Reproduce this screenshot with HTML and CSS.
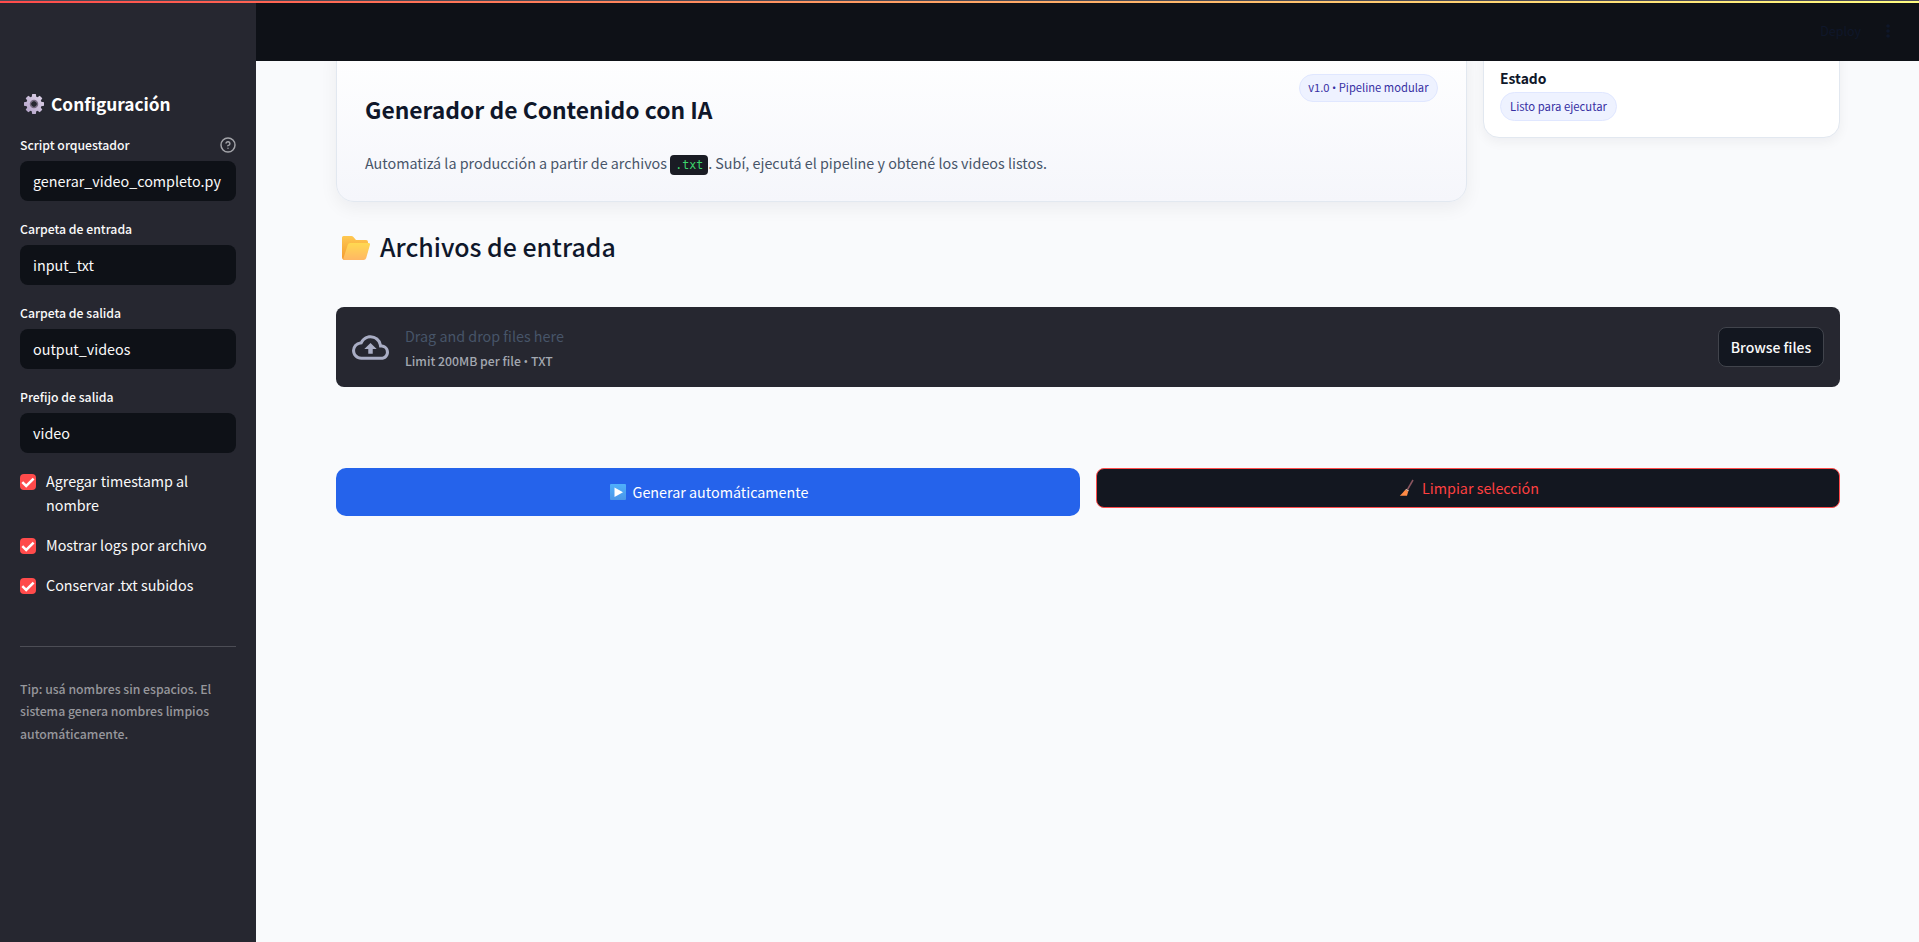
FILE: index.html
```html
<!DOCTYPE html>
<html lang="es">
<head>
<meta charset="utf-8">
<title>Generador de Contenido con IA</title>
<link rel="stylesheet" href="styles.css">
</head>
<body>
<div class="decoration"></div>
<div class="app">
  <aside class="sidebar">
    <h2 class="side-title">
      <svg class="gear" viewBox="0 0 20 20"><defs><linearGradient id="g" x1="1" y1="0" x2="0" y2="1"><stop offset="0" stop-color="#e0d6ea"/><stop offset="1" stop-color="#b09fc6"/></linearGradient></defs><g fill="url(#g)"><path fill-rule="evenodd" d="M8.2 0h3.6l.5 2.7 1.2.5L15.700 1.700 18.300 4.300 16.800 6.500l.5 1.200 2.700.5v3.600l-2.700.5-.5 1.200 1.500 2.200-2.600 2.600-2.200-1.500-1.200.5-.5 2.700H8.200l-.5-2.700-1.200-.5-2.200 1.500-2.600-2.600 1.500-2.200-.5-1.200L0 11.800V8.200l2.700-.5.500-1.200L1.700 4.300 4.300 1.700l2.200 1.500 1.200-.5zM10 7a3 3 0 1 0 0 6 3 3 0 0 0 0-6z"/></g><circle cx="10" cy="10" r="3.600" fill="none" stroke="#75687f" stroke-width="1.300"/></svg>
      <span>Configuración</span>
    </h2>
    <div class="field">
      <div class="label"><span>Script orquestador</span>
        <svg class="help" viewBox="0 0 24 24" fill="none" stroke="#a3a4a9" stroke-width="2.200" stroke-linecap="round" stroke-linejoin="round"><circle cx="12" cy="12" r="10.500"/><path d="M9.100 9a3 3 0 0 1 5.800 1c0 2-3 3-3 3M12 17h.01"/></svg>
      </div>
      <div class="input">generar_video_completo.py</div>
    </div>
    <div class="field"><div class="label">Carpeta de entrada</div><div class="input">input_txt</div></div>
    <div class="field"><div class="label">Carpeta de salida</div><div class="input">output_videos</div></div>
    <div class="field"><div class="label">Prefijo de salida</div><div class="input">video</div></div>
    <div class="checks">
      <div class="check"><svg class="box" viewBox="0 0 16 16"><rect width="16" height="16" rx="4" fill="#ff4b4b"/><path d="M2.300 8.200 6.200 12 13.600 4.600" fill="none" stroke="#fff" stroke-width="2.500"/></svg><span>Agregar timestamp al nombre</span></div>
      <div class="check"><svg class="box" viewBox="0 0 16 16"><rect width="16" height="16" rx="4" fill="#ff4b4b"/><path d="M2.300 8.200 6.200 12 13.600 4.600" fill="none" stroke="#fff" stroke-width="2.500"/></svg><span>Mostrar logs por archivo</span></div>
      <div class="check"><svg class="box" viewBox="0 0 16 16"><rect width="16" height="16" rx="4" fill="#ff4b4b"/><path d="M2.300 8.200 6.200 12 13.600 4.600" fill="none" stroke="#fff" stroke-width="2.500"/></svg><span>Conservar .txt subidos</span></div>
    </div>
    <div class="divider"></div>
    <p class="tip">Tip: usá nombres sin espacios. El sistema genera nombres limpios automáticamente.</p>
  </aside>
  <main class="main">
    <header class="topbar">
      <span class="deploy">Deploy</span>
      <svg class="dots" viewBox="0 0 4 14" fill="#0f172a"><circle cx="2" cy="2" r="1.800"/><circle cx="2" cy="7" r="1.800"/><circle cx="2" cy="12" r="1.800"/></svg>
    </header>
    <div class="content">
      <div class="row-top">
        <section class="hero">
          <div class="hero-head"><h1>Generador de Contenido con IA</h1><span class="pill">v1.0 <span class="bullet">•</span> Pipeline modular</span></div>
          <p>Automatizá la producción a partir de archivos <code>.txt</code>. Subí, ejecutá el pipeline y obtené los videos listos.</p>
        </section>
        <section class="status"><strong>Estado</strong><span class="pill">Listo para ejecutar</span></section>
      </div>
      <h2 class="section-title">
        <svg class="folder" viewBox="0 0 28 24"><defs><linearGradient id="f1" x1="0" y1="0" x2="0" y2="1"><stop offset="0" stop-color="#ffc851"/><stop offset="1" stop-color="#f39a2e"/></linearGradient><linearGradient id="f2" x1="0" y1="0" x2="0" y2="1"><stop offset="0" stop-color="#ffd951"/><stop offset="1" stop-color="#ffb764"/></linearGradient></defs><path d="M0 1.500Q0 0 1.500 0h8q1 0 1.700.8L14 4h10q2 0 2 2v10L3 24Q0 24 0 21z" fill="url(#f1)"/><path d="M8.300 7H26.500q2 0 1.400 2l-3.700 13q-.6 2-2.600 2H3q-2.100 0-1.500-2L5.700 9q.7-2 2.600-2z" fill="url(#f2)"/></svg>
        <span>Archivos de entrada</span>
      </h2>
      <section class="uploader">
        <svg class="cloud" viewBox="0 0 24 24" fill="#a9adc4"><path d="M19.350 10.040A7.490 7.490 0 0 0 12 4C9.110 4 6.600 5.640 5.350 8.040A5.994 5.994 0 0 0 0 14c0 3.310 2.690 6 6 6h13c2.760 0 5-2.240 5-5 0-2.640-2.050-4.780-4.650-4.960zM19 18H6c-2.210 0-4-1.790-4-4 0-2.050 1.530-3.760 3.560-3.970l1.070-.11.500-.95A5.469 5.469 0 0 1 12 6c2.620 0 4.880 1.860 5.390 4.430l.3 1.500 1.530.11A2.980 2.980 0 0 1 22 15c0 1.650-1.350 3-3 3zM8 13h2.550v3h2.900v-3H16l-4-4z"/></svg>
        <div class="drop"><span class="drag">Drag and drop files here</span><span class="limit">Limit 200MB per file <span class="bullet">•</span> TXT</span></div>
        <button class="browse">Browse files</button>
      </section>
      <div class="actions">
        <button class="generate"><svg class="play" viewBox="0 0 16 16"><defs><linearGradient id="p" x1="0" y1="0" x2="0" y2="1"><stop offset="0" stop-color="#4fb0fb"/><stop offset="1" stop-color="#4a96e8"/></linearGradient></defs><rect width="16" height="16" rx="1" fill="url(#p)"/><path d="M4.500 3.500v9.500l8.500-4.700z" fill="#fff"/></svg><span>Generar automáticamente</span></button>
        <button class="clear"><svg class="broom" viewBox="0 0 16 18"><path d="M14 1 8.500 10.500" stroke="#8b5660" stroke-width="1.500"/><path d="M7.200 9.800 10 11.500l-.8 1L6.300 11z" fill="#ddb4a0"/><path d="M6.300 10.800 9.200 12.500 8 16.700H.8q2.700-2.300 5.500-5.900z" fill="#ff8a45"/></svg><span>Limpiar selección</span></button>
      </div>
    </div>
  </main>
</div>
</body>
</html>
```
FILE: styles.css
```css
* { box-sizing: border-box; }
body { margin: 0; font-family: "Noto Sans CJK SC", "Noto Sans CJK JP", sans-serif; font-size: 14.330px; line-height: 24px; color: #fafafa; background: #f9fafc; }
h1, h2, p { margin: 0; }
button { font: inherit; margin: 0; padding: 0; display: flex; align-items: center; justify-content: center; }
.decoration { position: absolute; z-index: 3; top: 0; left: 0; width: 100%; height: 3px; border-top: 1px solid #4b4b56; background: linear-gradient(90deg, #ff4b4b, #fffd80); }
.bullet { font-family: "Open Sans", sans-serif; }
.app { display: flex; height: 942px; overflow: hidden; }
.sidebar { width: 256px; flex: none; background: #262730; padding: 89px 20px 0; }
.side-title { display: flex; align-items: center; gap: 7px; height: 30px; padding-left: 4px; font-size: 17.300px; font-weight: 600; color: #fff; }
.gear { width: 20px; height: 20px; }
.field { margin-top: 15px; height: 69px; }
.side-title + .field { margin-top: 14px; }
.label { display: flex; justify-content: space-between; align-items: center; height: 24px; line-height: 22px; padding-bottom: 1px; font-size: 12.250px; font-weight: 500; margin-bottom: 4px; }
.help { width: 16px; height: 16px; }
.input { height: 40px; border-radius: 8px; background: #0e1117; padding: 0 13px; line-height: 40px; white-space: nowrap; }
.checks { margin-top: 15px; display: flex; flex-direction: column; gap: 16px; }
.check { display: flex; gap: 10px; }
.box { width: 16px; height: 16px; margin-top: 5px; flex: none; }
.divider { height: 1px; background: #4c4d55; margin-top: 49px; }
.tip { margin-top: 31px; font-size: 12.250px; font-weight: 500; line-height: 22.400px; color: #97979c; }
.main { flex: 1; min-width: 0; display: flex; flex-direction: column; }
.topbar { height: 61px; flex: none; position: relative; z-index: 2; background: #0e1117; color: #0f172a; display: flex; align-items: center; justify-content: flex-end; gap: 25px; padding-right: 29px; }
.deploy { font-size: 12.500px; }
.dots { width: 4px; height: 14px; }
.content { padding: 0 79px 0 80px; }
.row-top { display: flex; gap: 16px; align-items: flex-start; margin-top: -20px; }
.hero { width: 1131px; height: 161px; padding: 32px 28px 0; border: 1px solid #e2e8f0; border-radius: 18px; background: linear-gradient(180deg, #fff, #f5f6fb); box-shadow: 0 6px 18px rgba(15, 23, 42, .06); color: #475569; }
.hero-head { display: flex; justify-content: space-between; height: 77px; }
h1 { font-size: 22.850px; line-height: 36px; font-weight: 700; color: #0f172a; margin-top: 17px; }
.pill { height: 28px; border: 1px solid #e0e7ff; border-radius: 15px; background: #eef2ff; color: #3730a3; font-size: 11.200px; line-height: 24px; padding: 0 8.500px; white-space: nowrap; }
code { font-family: "DejaVu Sans Mono", monospace; font-size: 11.600px; color: #3dd56d; background: #1a1c24; border-radius: 4px; padding: 3px 5px; }
.status { flex: 1; height: 97px; padding: 25px 16px 0; border: 1px solid #e2e8f0; border-radius: 16px; background: #fff; box-shadow: 0 4px 12px rgba(15, 23, 42, .05); color: #0f172a; display: flex; flex-direction: column; align-items: flex-start; }
.status strong { font-weight: 600; font-size: 13.900px; height: 24px; line-height: 22px; }
.status .pill { height: 29px; line-height: 26px; margin-top: 1px; font-size: 11.300px; padding: 0 9px; }
.section-title { display: flex; align-items: center; gap: 10px; height: 40px; line-height: 38px; margin: 25px 0 0 6px; font-size: 24.900px; font-weight: 500; color: #0f172a; }
.section-title span { padding-bottom: 2px; }
.folder { width: 28px; height: 24px; margin-top: 2px; }
.uploader { height: 80px; margin-top: 40px; padding: 0 16px; display: flex; align-items: center; border-radius: 8px; background: #262730; }
.cloud { width: 37px; height: 37px; margin-right: 16px; }
.drop { display: flex; flex-direction: column; padding-top: 2px; }
.drag { color: #475569; line-height: 26px; }
.limit { font-size: 12.250px; font-weight: 500; color: #a3a8b0; }
.browse { margin-left: auto; width: 106px; height: 40px; border: 1px solid #41444c; border-radius: 8px; background: #131720; color: #fafafa; font-size: 14px; font-weight: 500; }
.actions { display: grid; grid-template-columns: 1fr 1fr; gap: 16px; align-items: start; margin-top: 81px; }
.generate { height: 48px; border: 0; border-radius: 10px; background: #2563eb; color: #fff; gap: 7px; padding-left: 2px; }
.play { width: 16px; height: 16px; }
.clear { height: 40px; border: 1px solid #ff4b4b; border-radius: 8px; background: #131720; color: #ff4040; gap: 7px; padding-left: 2px; }
.broom { width: 16px; height: 18px; }
```
